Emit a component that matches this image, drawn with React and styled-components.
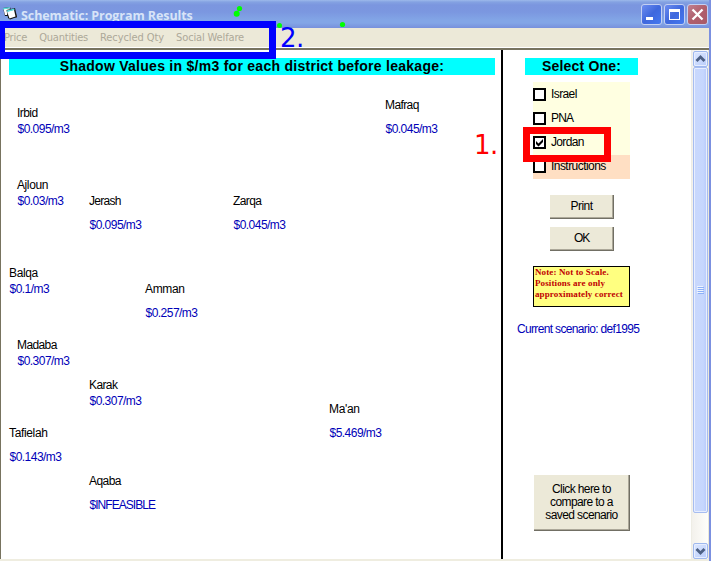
import React from 'react';
import styled, { createGlobalStyle } from 'styled-components';

const GlobalStyle = createGlobalStyle`
  * { box-sizing: border-box; }
  body { margin: 0; overflow: hidden; background: #fff; }
`;

const Window = styled.div`
  position: relative;
  display: flex;
  flex-direction: column;
  width: 711px;
  height: 561px;
  overflow: hidden;
  background: #ece9d8;
  border-right: 2px solid #7b90e0;
  font-family: "Liberation Sans", Arial, sans-serif;
  font-size: 12px;
  letter-spacing: -0.45px;
  color: #000;
`;

const TitleBar = styled.header`
  display: flex;
  flex: 0 0 28px;
  align-items: flex-start;
  margin-right: -2px;
  padding: 4px 3px 0 2px;
  background: linear-gradient(#9db9eb 0, #84a2e2 2px, #7b96df 5px, #7b97e0 12px, #82a5e6 20px, #82a5e6 23px, #7790dc 28px);
`;

const Title = styled.h1`
  flex: 1;
  margin: 2px 0 0 2px;
  font: bold 12.5px/19px "Open Sans", "Noto Sans", sans-serif;
  letter-spacing: -0.08px;
  color: #d8e4f8;
`;

const CaptionButtons = styled.div`
  display: flex;
  gap: 2px;
`;

const CaptionButton = styled.button`
  display: block;
  width: 21px;
  height: 21px;
  padding: 0;
  border: 1px solid #c3d0f3;
  border-radius: 3px;
  background: ${p => p.$close
    ? 'linear-gradient(135deg, #c08090, #b05f6c 50%, #a85a68)'
    : 'linear-gradient(135deg, #6d8df0, #3f68dd 50%, #4478f0)'};
  svg { display: block; }
`;

const MenuBar = styled.nav`
  display: flex;
  flex: 0 0 22px;
  gap: 12px;
  padding-left: 4px;
  border-bottom: 2px solid #77735f;
  box-shadow: inset 0 -1px #fff;
  font: 11px/19px "DejaVu Sans Condensed", "DejaVu Sans", sans-serif;
  color: #aca899;
`;

const MenuItem = styled.span`
  letter-spacing: ${p => p.$spacing}px;
  white-space: nowrap;
`;

const Body = styled.div`
  display: flex;
  flex: 0 0 509px;
  margin-right: 1px;
  border-left: 1px solid #77735f;
  background: #fff;
`;

const MapPane = styled.main`
  position: relative;
  width: 502px;
  border-right: 2px solid #000;
  padding: 8px 0 0 8px;
`;

const Banner = styled.h2`
  width: ${p => p.$width}px;
  height: 17px;
  margin: 0;
  background: #0ff;
  text-align: center;
  font: bold 14px/17px "Liberation Sans", Arial, sans-serif;
  letter-spacing: ${p => p.$spacing}px;
  white-space: nowrap;
`;

const MapLabel = styled.span`
  position: absolute;
  left: ${p => p.$x - 1}px;
  top: ${p => p.$y - 50}px;
  line-height: 14px;
  white-space: nowrap;
  color: ${p => (p.$value ? '#0000b8' : '#000')};
  letter-spacing: ${p => p.$spacing}px;
`;

const SidePane = styled.aside`
  display: flex;
  flex-direction: column;
  width: 188px;
  padding: 8px 0 0 22px;
`;

const Options = styled.div`
  width: 97px;
  margin: 7px 0 0 8px;
  padding-top: 1px;
  background: #ffffe1;
`;

const Option = styled.label`
  display: flex;
  align-items: flex-start;
  gap: 5px;
  height: 24px;
  padding-top: 5px;
  background: ${p => (p.$accent ? '#ffdfc3' : 'transparent')};
  line-height: 13px;
  letter-spacing: ${p => p.$spacing}px;
`;

const Box = styled.span`
  width: 13px;
  height: 13px;
  border: 2px solid #000;
  background: #fff;
  svg { display: block; }
`;

const PushButton = styled.button`
  display: flex;
  align-items: center;
  justify-content: center;
  width: ${p => p.$width}px;
  height: ${p => p.$height}px;
  margin: ${p => p.$margin};
  padding: 0 0 1px;
  border: 0;
  background: #ece9d8;
  box-shadow: inset 1px 1px #fff, inset -1px -1px #716f64, inset -2px -2px #aca899;
  font: 12px/13px "Liberation Sans", Arial, sans-serif;
  letter-spacing: ${p => p.$spacing}px;
  color: #000;
  text-align: center;
`;

const Note = styled.p`
  width: 97px;
  height: 41px;
  margin: 15px 0 0 8px;
  padding: 0 0 0 1px;
  border: 1px solid #000;
  background: #ffff80;
  font: bold 9px/11px "Liberation Serif", serif;
  letter-spacing: 0.12px;
  white-space: nowrap;
  color: #c00000;
`;

const Scenario = styled.p`
  margin: 15px 0 0 -8px;
  line-height: 14px;
  letter-spacing: -0.66px;
  white-space: nowrap;
  color: #0000b8;
`;

const ScrollBar = styled.div`
  display: flex;
  flex-direction: column;
  width: 17px;
  height: 509px;
  padding: 1px 0 0 1px;
  border-left: 1px solid #eeede5;
  background: linear-gradient(90deg, #f3f1ec, #fefefb);
`;

const ScrollButton = styled.button`
  display: block;
  width: 15px;
  height: 16px;
  padding: 0;
  border: 1px solid #9eb8ee;
  border-radius: 2px;
  background: linear-gradient(135deg, #dce7ff, #b9cdfb);
  box-shadow: inset 0 0 0 1px #e7eeff;
  svg { display: block; }
`;

const Thumb = styled.div`
  display: flex;
  align-items: center;
  justify-content: center;
  width: 15px;
  height: 446px;
  margin-bottom: 30px;
  border: 1px solid #a7bdf0;
  border-radius: 2px;
  background: linear-gradient(90deg, #c9d8fc, #c6d7fe 70%, #b7cafa);
  box-shadow: inset 0 0 0 1px #e7eeff;
`;

const BottomEdge = styled.div`
  flex: 0 0 2px;
  background: #efede0;
`;

const Frame = styled.div`
  position: absolute;
  left: ${p => p.$x}px;
  top: ${p => p.$y}px;
  width: ${p => p.$w}px;
  height: ${p => p.$h}px;
  border: 7px solid ${p => p.$color};
  pointer-events: none;
`;

const StepNumber = styled.span`
  position: absolute;
  left: ${p => p.$x}px;
  top: ${p => p.$y}px;
  font: 26px/30px "DejaVu Sans", sans-serif;
  letter-spacing: -0.5px;
  color: ${p => p.$color};
`;

const Dots = styled.svg`
  position: absolute;
  left: 230px;
  top: 0;
`;

const places = [
  ['Irbid', 17, 106, '$0.095/m3', 17, 122],
  ['Mafraq', 385, 98, '$0.045/m3', 385, 122],
  ['Ajloun', 17, 178, '$0.03/m3', 17, 194],
  ['Jerash', 89, 194, '$0.095/m3', 89, 218],
  ['Zarqa', 233, 194, '$0.045/m3', 233, 218],
  ['Balqa', 9, 266, '$0.1/m3', 9, 282],
  ['Amman', 145, 282, '$0.257/m3', 145, 306],
  ['Madaba', 17, 338, '$0.307/m3', 17, 354],
  ['Karak', 89, 378, '$0.307/m3', 89, 394],
  ["Ma'an", 329, 402, '$5.469/m3', 329, 426],
  ['Tafielah', 9, 426, '$0.143/m3', 9, 450],
  ['Aqaba', 89, 474, '$INFEASIBLE', 89, 498],
];

const nameSpacing = { Irbid: -0.55, Mafraq: -0.6, Ajloun: -0.4, Jerash: -0.7, Zarqa: -0.6, Madaba: -0.6, Karak: -0.6, Aqaba: -0.55 };

const options = [
  { name: 'Israel', spacing: -0.6 },
  { name: 'PNA', spacing: -0.8 },
  { name: 'Jordan', spacing: -0.65, checked: true },
  { name: 'Instructions', spacing: -0.55, accent: true },
];

function AppIcon() {
  return (
    <svg width="17" height="17" viewBox="0 0 17 17">
      <path d="M12 6l3 5v3h-3z" fill="#6b7390" />
      <path d="M1 4l7-1 1 3-3 6H3z" fill="#111" />
      <path d="M1.5 5l6-1 .5 2-3 5H3z" fill="#fff" />
      <path d="M1 4l7-1v1.3L1.3 5.4z" fill="#58dde0" />
      <path d="M4.5 6l8.500-2L15 13l-7 2.500L6 14z" fill="#111" />
      <path d="M5 7.500l7-1.800L13.500 12.500 7.500 14.500z" fill="#fff" />
      <path d="M4.700 6.500l7.500-1.900.3 1.400-7.400 1.900z" fill="#58dde0" />
    </svg>
  );
}

function Chevron({ down }) {
  return (
    <svg width="13" height="14" viewBox="0 0 13 14">
      <path d={down ? 'M2.5 5l4 4L10.5 5' : 'M2.5 9l4-4L10.5 9'} fill="none" stroke="#4d6185" strokeWidth="2.8" />
    </svg>
  );
}

export default function App() {
  return (
    <>
      <GlobalStyle />
      <Window>
        <TitleBar>
          <AppIcon />
          <Title>Schematic: Program Results</Title>
          <CaptionButtons>
            <CaptionButton aria-label="Minimize">
              <svg width="19" height="19"><path d="M4 12h7v3H4z" fill="#fff" /></svg>
            </CaptionButton>
            <CaptionButton aria-label="Maximize">
              <svg width="19" height="19" shapeRendering="crispEdges">
                <path d="M4 4h11v11H4zM5 7v7h9V7z" fill="#fff" fillRule="evenodd" />
              </svg>
            </CaptionButton>
            <CaptionButton $close aria-label="Close">
              <svg width="19" height="19"><path d="M4.5 4.5l10 10M14.5 4.5l-10 10" stroke="#fff" strokeWidth="2.3" /></svg>
            </CaptionButton>
          </CaptionButtons>
        </TitleBar>
        <MenuBar>
          <MenuItem $spacing={-0.2}>Price</MenuItem>
          <MenuItem $spacing={-0.2}>Quantities</MenuItem>
          <MenuItem $spacing={-0.08}>Recycled Qty</MenuItem>
          <MenuItem $spacing={-0.14}>Social Welfare</MenuItem>
        </MenuBar>
        <Body>
          <MapPane>
            <Banner $width={486} $spacing={0.27}>Shadow Values in $/m3 for each district before leakage:</Banner>
            {places.map(([name, x, y, value, vx, vy]) => (
              <React.Fragment key={name}>
                <MapLabel $x={x} $y={y} $spacing={nameSpacing[name] ?? -0.35}>{name}</MapLabel>
                <MapLabel $value $x={vx + 0.5} $y={vy} $spacing={value === '$INFEASIBLE' ? -0.95 : -0.53}>{value}</MapLabel>
              </React.Fragment>
            ))}
          </MapPane>
          <SidePane>
            <Banner $width={113} $spacing={0.2}>Select One:</Banner>
            <Options>
              {options.map(o => (
                <Option key={o.name} $accent={o.accent} $spacing={o.spacing}>
                  <Box>
                    {o.checked && (
                      <svg width="9" height="9"><path d="M1 3v3l2.5 2.5L8 4V1L3.5 5.5z" fill="#000" /></svg>
                    )}
                  </Box>
                  {o.name}
                </Option>
              ))}
            </Options>
            <PushButton $width={65} $height={25} $margin="15px 0 0 24px" $spacing={-0.5}>Print</PushButton>
            <PushButton $width={65} $height={25} $margin="7px 0 0 24px" $spacing={-1.2}>OK</PushButton>
            <Note>Note: Not to Scale.<br />Positions are only<br />approximately correct</Note>
            <Scenario>Current scenario: def1995</Scenario>
            <PushButton $width={97} $height={57} $margin="138px 0 0 8px" $spacing={-0.6}>
              Click here to<br />compare to a<br />saved scenario
            </PushButton>
          </SidePane>
          <ScrollBar>
            <ScrollButton aria-label="Scroll up"><Chevron /></ScrollButton>
            <Thumb>
              <svg width="7" height="8" shapeRendering="crispEdges">
                <path d="M0 0h6v1H0zM0 2h6v1H0zM0 4h6v1H0zM0 6h6v1H0z" fill="#eef4fe" />
                <path d="M1 1h6v1H1zM1 3h6v1H1zM1 5h6v1H1zM1 7h6v1H1z" fill="#8cb0f8" />
              </svg>
            </Thumb>
            <ScrollButton aria-label="Scroll down"><Chevron down /></ScrollButton>
          </ScrollBar>
        </Body>
        <BottomEdge />
        <Dots width="120" height="30" fill="#0f0">
          <path d="M7 13L9.5 8" stroke="#0f0" strokeWidth="1" />
          <circle cx="9.5" cy="8.5" r="2.6" />
          <circle cx="6.7" cy="13.8" r="3" />
          <circle cx="49.5" cy="25.5" r="2.5" />
          <circle cx="112.5" cy="24.5" r="2.6" />
        </Dots>
        <Frame $x={-2} $y={21} $w={278} $h={38} $color="#00f" />
        <Frame $x={523} $y={127} $w={88} $h={35} $color="#f00" />
        <StepNumber $x={280} $y={23} $color="#00f">2.</StepNumber>
        <StepNumber $x={474} $y={130} $color="#f00">1.</StepNumber>
      </Window>
    </>
  );
}
